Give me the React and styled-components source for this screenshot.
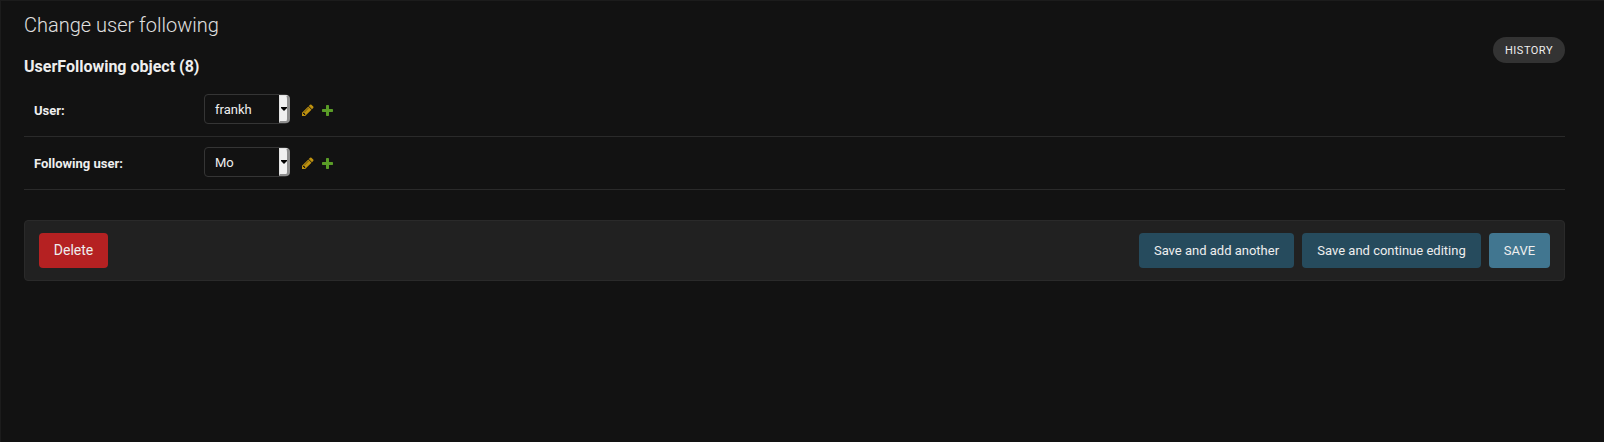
import React from "react";
import styled, { createGlobalStyle } from "styled-components";

const GlobalStyle = createGlobalStyle`
  * { box-sizing: border-box; }
  body {
    margin: 0;
    background: #121212;
    color: #eeeeee;
    font-family: Roboto, "Liberation Sans", sans-serif;
    font-size: 13px;
  }
`;

const Page = styled.main`
  height: 442px;
  padding: 14px 39px 0 23px;
  border: 1px solid #1c1c1c;
  border-width: 1px 0 0 1px;
`;

const Title = styled.h1`
  margin: 0;
  height: 20px;
  font-size: 20px;
  line-height: 20px;
  font-weight: 300;
  color: #e0e0e0;
`;

const Subheader = styled.div`
  display: flex;
  justify-content: space-between;
  align-items: flex-start;
  height: 49px;
  padding-top: 2px;
`;

const ObjectName = styled.h2`
  margin: 20px 0 0;
  font-size: 16px;
  line-height: 20px;
  font-weight: 700;
`;

const HistoryLink = styled.a`
  display: flex;
  align-items: center;
  height: 26px;
  padding: 0 12px;
  border-radius: 15px;
  background: #333333;
  font-size: 11px;
  letter-spacing: 0.5px;
  text-transform: uppercase;
`;

const Row = styled.div`
  display: flex;
  align-items: flex-start;
  height: 53px;
  padding: 10px;
  border-bottom: 1px solid #2a2a2a;
`;

const Label = styled.label`
  width: 170px;
  padding-top: 9px;
  line-height: 15px;
  font-weight: 700;
`;

const Select = styled.div`
  display: flex;
  justify-content: space-between;
  width: 85px;
  height: 30px;
  border: 1px solid #353535;
  border-radius: 4px;
  line-height: 30px;
  padding-left: 10px;
`;

const Arrow = styled.span`
  display: flex;
  align-items: center;
  justify-content: center;
  width: 11px;
  height: 28px;
  margin-right: -2px;
  background: #f0f0f0;
  border: solid;
  border-width: 1px 3px 2px 1px;
  border-color: #e3e3e3 #8f8f8f #8f8f8f #e3e3e3;
  border-radius: 0 4px 4px 0;
`;

const Icon = styled.svg`
  flex: none;
  fill: ${(p) => p.$color};
`;

const ChangeIcon = styled(Icon)`
  width: 12px;
  height: 12px;
  margin: 10px 0 0 13px;
`;

const AddIcon = styled(Icon)`
  width: 11px;
  height: 11px;
  margin: 11px 0 0 8px;
`;

const SubmitRow = styled.div`
  display: flex;
  gap: 8px;
  margin-top: 30px;
  padding: 12px 14px;
  border: 1px solid #2a2a2a;
  border-radius: 4px;
  background: #212121;
`;

const Button = styled.button`
  height: 35px;
  width: ${(p) => p.$width}px;
  padding: 0;
  border: 0;
  border-radius: 4px;
  color: #eeeeee;
  background: #264b5d;
  font: 400 13px Roboto, "Liberation Sans", sans-serif;
  white-space: nowrap;
`;

const SaveButton = styled(Button)`
  background: #417690;
`;

const DeleteButton = styled(Button)`
  margin-right: auto;
  padding-bottom: 2px;
  background: #b52122;
  font-size: 14px;
`;

const PENCIL =
  "M491 1536l91-91-235-235-91 91v107h128v128h107zm523-928q0-22-22-22-10 0-17 7l-542 542q-7 7-7 17 0 22 22 22 10 0 17-7l542-542q7-7 7-17zm-54-192l416 416-832 832h-416v-416zm683 96q0 53-37 90l-166 166-416-416 166-165q36-38 90-38 53 0 91 38l235 234q37 39 37 91z";
const PLUS =
  "M1600 796v192q0 40-28 68t-68 28h-416v416q0 40-28 68t-68 28h-192q-40 0-68-28t-28-68v-416h-416q-40 0-68-28t-28-68v-192q0-40 28-68t68-28h416v-416q0-40 28-68t68-28h192q40 0 68 28t28 68v416h416q40 0 68 28t28 68z";

function FormRow({ label, value }) {
  return (
    <Row>
      <Label>{label}</Label>
      <Select>
        {value}
        <Arrow>
          <svg width="6" height="4" viewBox="0 0 6 4">
            <path d="M0 0h6v1L3 4 0 1z" />
          </svg>
        </Arrow>
      </Select>
      <ChangeIcon viewBox="128 84 1580 1580" $color="#bf920f">
        <path d={PENCIL} />
      </ChangeIcon>
      <AddIcon viewBox="192 188 1408 1408" $color="#5a9c27">
        <path d={PLUS} />
      </AddIcon>
    </Row>
  );
}

export default function App() {
  return (
    <>
      <GlobalStyle />
      <Page>
        <Title>Change user following</Title>
        <Subheader>
          <ObjectName>UserFollowing object (8)</ObjectName>
          <HistoryLink>History</HistoryLink>
        </Subheader>
        <FormRow label="User:" value="frankh" />
        <FormRow label="Following user:" value="Mo" />
        <SubmitRow>
          <DeleteButton $width={69}>Delete</DeleteButton>
          <Button $width={155}>Save and add another</Button>
          <Button $width={179}>Save and continue editing</Button>
          <SaveButton $width={61}>SAVE</SaveButton>
        </SubmitRow>
      </Page>
    </>
  );
}
